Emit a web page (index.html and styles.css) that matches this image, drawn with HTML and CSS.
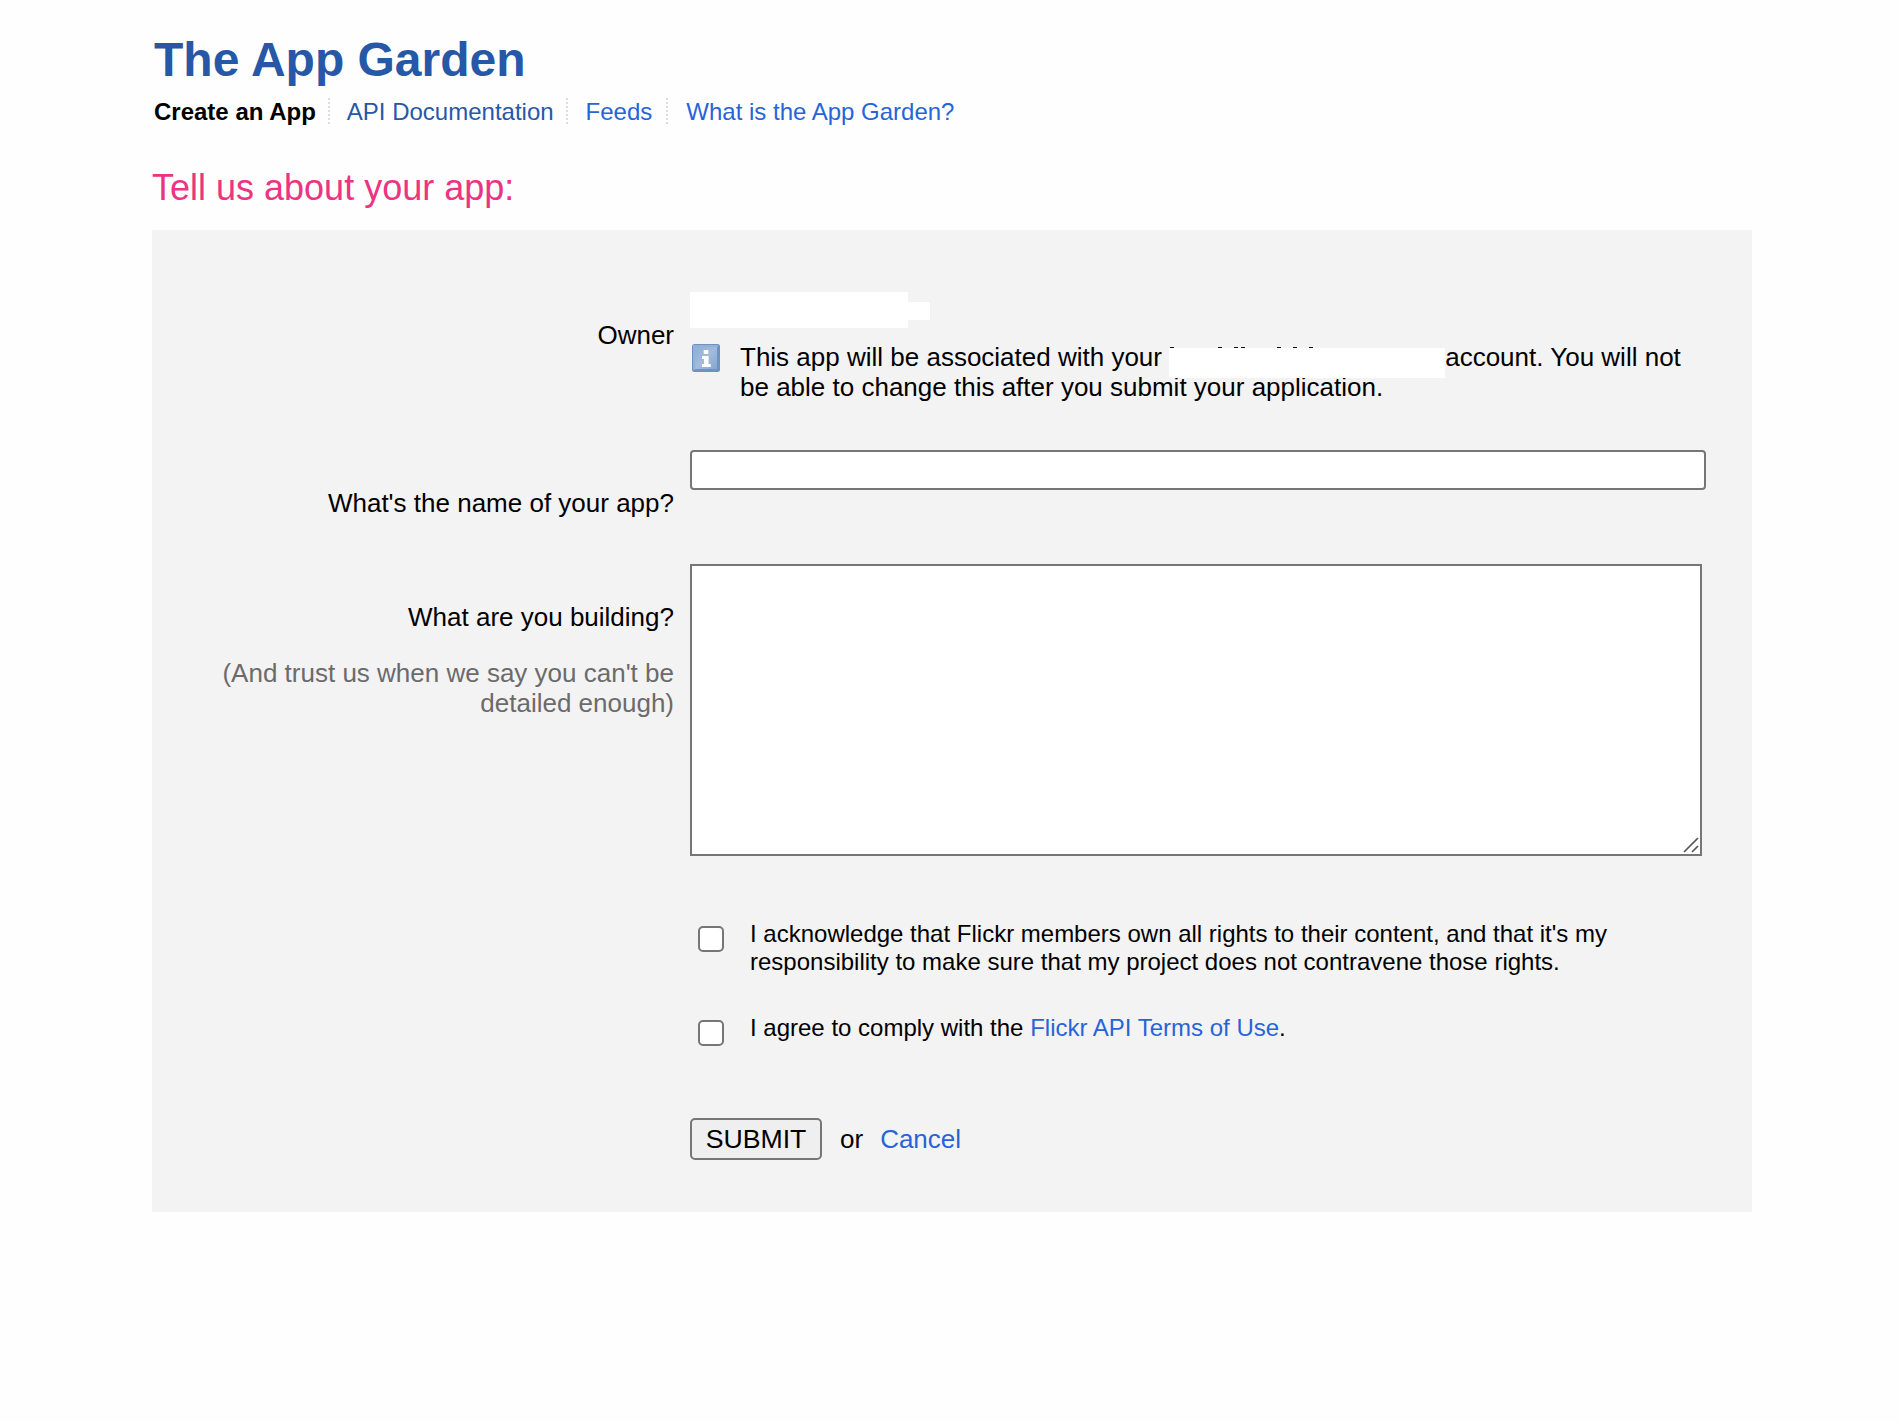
FILE: index.html
```html
<!DOCTYPE html>
<html lang="en">
<head>
<meta charset="utf-8">
<title>The App Garden</title>
<link rel="stylesheet" href="styles.css">
</head>
<body>
<main class="page">
  <h1 class="title">The App Garden</h1>
  <nav class="nav">
    <span class="nav-item current">Create an App</span>
    <a class="nav-item visited" href="#">API Documentation</a>
    <a class="nav-item wide" href="#">Feeds</a>
    <a class="nav-item wide" href="#">What is the App Garden?</a>
  </nav>
  <h2 class="subtitle">Tell us about your app:</h2>
  <form class="panel">
    <div class="row row-owner">
      <div class="label">Owner</div>
      <div class="field">
        <div class="owner"><span class="owner-name"></span><span class="owner-tail"></span></div>
        <div class="note">
          <svg class="info" width="30" height="30" viewBox="0 0 30 30">
            <defs><linearGradient id="g" x1="0" y1="0" x2="1" y2="1"><stop offset="0" stop-color="#8fb0d6"/><stop offset=".5" stop-color="#a3bbdc"/><stop offset="1" stop-color="#84a5cf"/></linearGradient></defs>
            <rect x="1" y="1" width="28" height="28" rx="2.5" fill="#6f93c0"/>
            <path d="M3 27V3H27" fill="none" stroke="#93b1d6" stroke-width="2"/>
            <rect x="4" y="4" width="22" height="22" fill="url(#g)"/>
            <path d="M12.7 7h4.6v4h-4.6zM11 13h6.6v8h2.2v3H11v-3h2v-5h-2z" fill="#fff"/>
          </svg>
          <p class="note-text">This app will be associated with your <span class="account"><svg class="account-tips" width="276" height="1" viewBox="0 0 276 1"><path d="M1 .5h4M49 .5h4M65 .5h4M72 .5h4M108 .5h4M124 .5h4M140 .5h4" stroke="#111" stroke-width="1"/></svg></span>account. You will not<br>be able to change this after you submit your application.</p>
        </div>
      </div>
    </div>
    <div class="row row-name">
      <label class="label" for="name">What's the name of your app?</label>
      <input class="text-input" id="name" type="text">
    </div>
    <div class="row row-about">
      <div class="label"><label for="about">What are you building?</label>
        <p class="hint">(And trust us when we say you can't be detailed enough)</p></div>
      <div class="area-wrap"><textarea class="area" id="about"></textarea>
        <svg class="grip" width="16" height="16" viewBox="0 0 16 16"><path d="M1 15L15 1M9 15L15 9" stroke="#555" stroke-width="1.7"/></svg></div>
    </div>
    <div class="checks">
      <label class="check"><input class="box" type="checkbox"><span>I acknowledge that Flickr members own all rights to their content, and that it's my<br>responsibility to make sure that my project does not contravene those rights.</span></label>
      <label class="check"><input class="box" type="checkbox"><span>I agree to comply with the <a href="#">Flickr API Terms of Use</a>.</span></label>
    </div>
    <div class="actions"><button class="submit" type="button">SUBMIT</button><span>or</span><a href="#">Cancel</a></div>
  </form>
</main>
</body>
</html>
```

FILE: styles.css
```css
* { box-sizing: border-box; }
body { margin: 0; background: #fefefe; color: #000; font: 26px/30px "Liberation Sans", Arial, sans-serif; }
a { color: #2864d8; text-decoration: none; }
h1, h2, p { margin: 0; }
.page { width: 1600px; margin-left: 152px; padding-top: 32px; }
.title { padding-left: 2px; font-size: 48px; line-height: 56px; color: #2758a8; }
.nav { display: flex; margin: 10px 0 0 2px; font-size: 24px; line-height: 28px; }
.nav-item + .nav-item {
  margin-left: 12px; padding-left: 19px;
  background: repeating-linear-gradient(#ddd 0 2px, transparent 2px 4px) left top / 2px 28px no-repeat;
}
.nav-item + .wide { padding-left: 20px; }
.nav-item.wide + .wide { margin-left: 14px; }
.current { font-weight: bold; }
.visited { color: #2758a8; }
.subtitle { margin-top: 41px; font-size: 36px; font-weight: normal; line-height: 42px; color: #ed3482; }
.panel { height: 982px; margin-top: 21px; padding-top: 62px; background: #f3f3f3; }
.row { display: grid; grid-template-columns: 522px 1fr; column-gap: 16px; align-items: start; }
.label { text-align: right; }
.row-owner { height: 158px; }
.row-owner .label { padding-top: 28px; }
.owner { display: flex; height: 36px; }
.owner-name { width: 218px; background: #fff; }
.owner-tail { width: 22px; height: 18px; margin-top: 10px; background: #fff; }
.note { display: flex; gap: 19px; margin-top: 14px; padding-left: 1px; }
.info { flex: none; margin-top: 1px; }
.note-text { white-space: nowrap; }
.account { position: relative; z-index: 1; display: inline-block; width: 276px; height: 30px; vertical-align: top; }
.account::after { content: ""; position: absolute; left: 0; top: 6px; width: 276px; height: 30px; background: #fff; }
.account-tips { position: absolute; left: 0; top: 5px; }
.row-name { height: 114px; }
.row-name .label { padding-top: 38px; }
.text-input { width: 1016px; height: 40px; border: 2px solid #767676; border-radius: 4px; background: #fff; }
.row-about { height: 356px; }
.row-about .label { padding-top: 38px; }
.hint { margin: 26px 0 0 50px; color: #6b6b6b; }
.area-wrap { position: relative; width: 1012px; height: 292px; }
.area { display: block; width: 100%; height: 100%; border: 2px solid #767676; border-radius: 0; background: #fff; resize: none; }
.grip { position: absolute; right: 3px; bottom: 3px; }
.checks { display: grid; gap: 38px; padding-left: 546px; font-size: 24px; line-height: 28px; }
.check { display: flex; gap: 26px; }
.box { flex: none; appearance: none; width: 26px; height: 26px; margin: 6px 0 0; border: 2px solid #767676; border-radius: 5px; background: #fff; }
.actions { display: flex; align-items: center; gap: 17px; margin: 72px 0 0 538px; }
.submit { width: 132px; height: 42px; margin-right: 1px; padding: 0; border: 2px solid #767676; border-radius: 5px; background: #efefef; color: #000; font: inherit; font-size: 26.667px; }
```
